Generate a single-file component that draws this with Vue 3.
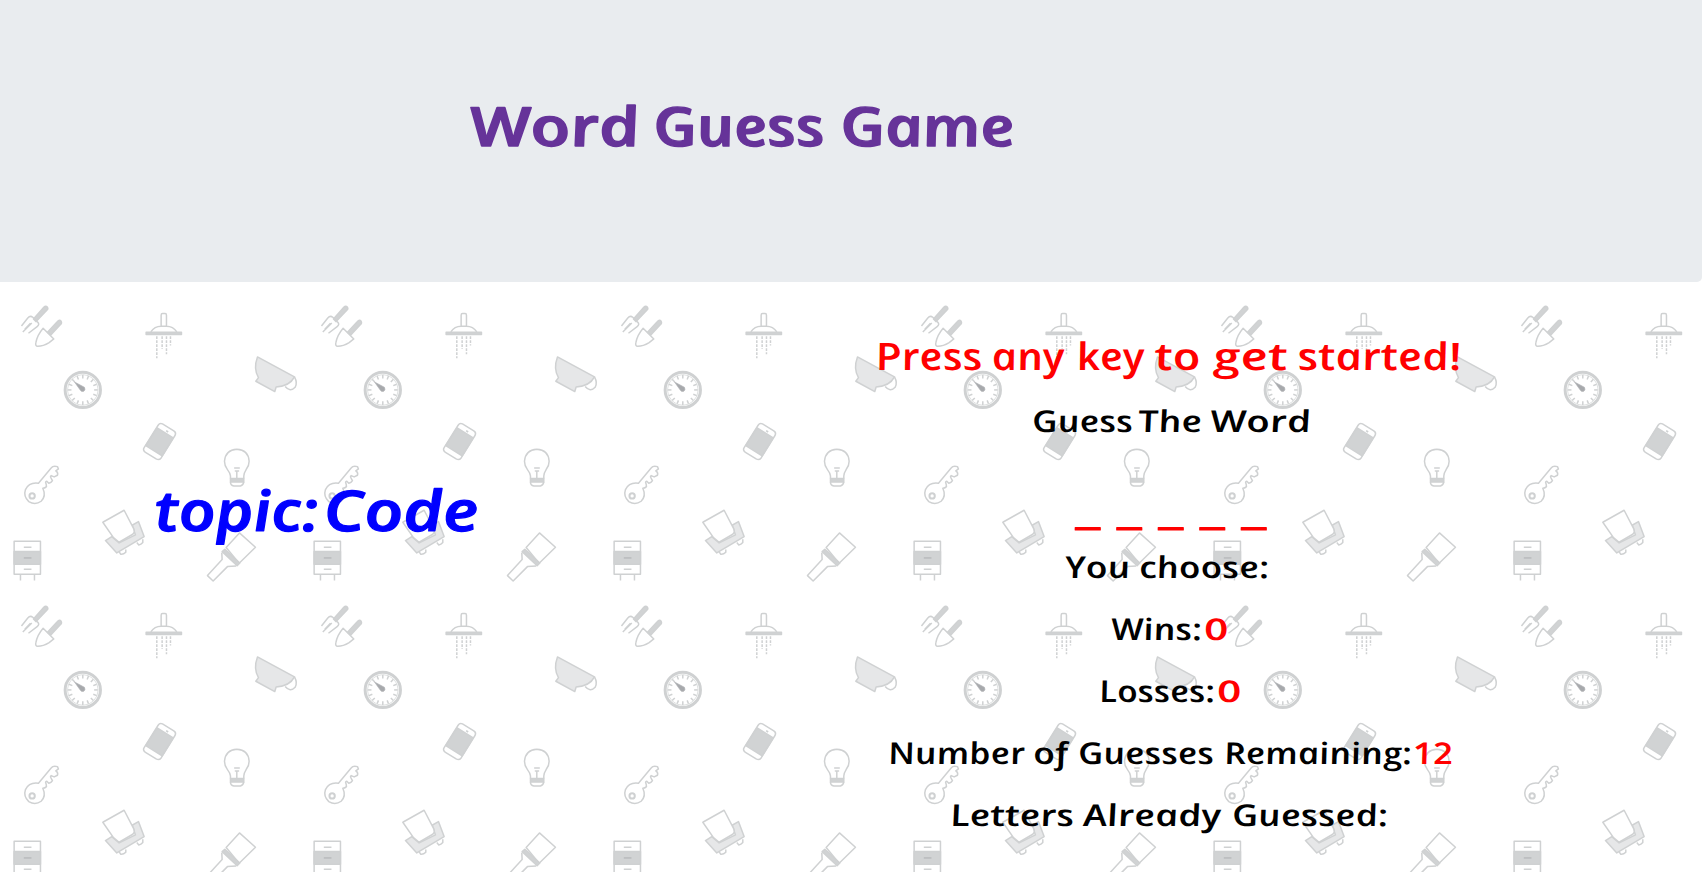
<script setup>
const topic = {
  words: [
    { t: 'topic:', x: 156, w: 164 },
    { t: 'Code', x: 325, w: 155 },
  ],
}

const title = [
  { t: 'Word', x: 473, w: 170 },
  { t: 'Guess', x: 657, w: 171 },
  { t: 'Game', x: 844, w: 174 },
]

const lines = [
  {
    kind: 'lead',
    words: [
      { t: 'Press', x: 878, w: 107 },
      { t: 'any', x: 994, w: 73 },
      { t: 'key', x: 1079, w: 68 },
      { t: 'to', x: 1157, w: 46 },
      { t: 'get', x: 1215, w: 75 },
      { t: 'started!', x: 1300, w: 164 },
    ],
  },
  {
    kind: 'plain',
    words: [
      { t: 'Guess', x: 1034, w: 101 },
      { t: 'The', x: 1140, w: 64 },
      { t: 'Word', x: 1212, w: 101 },
    ],
  },
  {
    kind: 'blanks',
    words: [1075.5, 1117, 1158.5, 1200, 1241.5].map((x) => ({ t: '_', x, w: 24.5 })),
  },
  {
    kind: 'plain',
    words: [
      { t: 'You', x: 1067, w: 65 },
      { t: 'choose:', x: 1141, w: 130 },
    ],
  },
  {
    kind: 'plain',
    words: [
      { t: 'Wins:', x: 1113, w: 91 },
      { t: '0', x: 1206, w: 24, hot: true },
    ],
  },
  {
    kind: 'plain',
    words: [
      { t: 'Losses:', x: 1101, w: 116 },
      { t: '0', x: 1219, w: 24, hot: true },
    ],
  },
  {
    kind: 'plain',
    words: [
      { t: 'Number', x: 890, w: 137 },
      { t: 'of', x: 1035, w: 35 },
      { t: 'Guesses', x: 1080, w: 136 },
      { t: 'Remaining:', x: 1226, w: 188 },
      { t: '12', x: 1415, w: 40, hot: true },
    ],
  },
  {
    kind: 'plain',
    words: [
      { t: 'Letters', x: 952, w: 124 },
      { t: 'Already', x: 1085, w: 138 },
      { t: 'Guessed:', x: 1234, w: 156 },
    ],
  },
]

const ticks = Array.from({ length: 16 }, (_, i) => i * 22.5)
</script>

<template>
  <div class="page">
    <svg class="wallpaper" width="1702" height="872">
      <defs>
        <pattern id="household" width="300" height="300" patternUnits="userSpaceOnUse">
          <g transform="translate(-.2 -.4) scale(.333333)" class="ink">
            <g transform="translate(0 -60)">
              <!-- fork and trowel -->
              <path class="solid" d="M101 118 132 83Q138 77 143 83Q146 88 141 92L109 126Z" />
              <path d="M65 139 84 115Q91 107 99 113L113 127Q121 134 112 141L86 161M69 157 96 130M75 149 92 131" />
              <path class="solid" d="M143 158 173 126Q179 119 184 125Q187 131 182 135L153 166Z" />
              <path d="M130 146 162 178 148 189Q130 200 114 200Q106 199 108 190Q112 167 130 146Z" />
              <!-- shower head -->
              <path d="M484 140V107Q484 102 488 102H496Q500 102 500 107V140M453 157Q464 140 484 140H500Q520 140 531 157" />
              <path class="solid" d="M439 158H545V165H439Z" />
              <path stroke-dasharray="8 4" d="M471 170V236M487 170V208M500 170V224M512 170V198" />
              <!-- dial -->
              <circle cx="249" cy="331" r="53" stroke-width="9" />
              <circle cx="249" cy="331" r="46" stroke-width="2" />
              <path
                v-for="a in ticks"
                :key="a"
                d="M249 286V297"
                :transform="`rotate(${a} 249 331)`"
              />
              <path class="needle" d="M224 307 254 323Q258 331 252 335Q245 338 241 331Z" />
              <!-- cup -->
              <path class="light" d="M773 232 884 292Q870 320 829 322L825 336 768 305 776 294Q760 267 773 232Z" />
              <path d="M884 292Q894 310 886 323Q871 339 856 321" />
            </g>
            <g transform="translate(0 360)">
              <!-- phone -->
              <path d="M488 13 522 34Q530 39 526 47L484 115Q478 123 469 118L437 98Q428 92 433 84L475 17Q480 9 488 13Z" />
              <path class="solid" d="M472 25 520 55 487 109 438 78Z" />
              <path stroke-width="5" d="M499 33 505 37" />
              <!-- key -->
              <path d="M116 191 154 145Q160 137 173 141L176 148 168 154Q176 159 173 167L163 172 154 168Q150 172 154 176L158 183Q154 190 147 191L141 185Q135 187 139 193L140 201Q135 206 129 206Q140 229 124 245Q106 258 87 246Q70 231 77 210Q88 187 116 191Z" />
              <circle cx="97" cy="229" r="8" stroke-width="6" />
              <!-- bulb -->
              <path d="M692 177V169Q691 160 683 150Q674 139 674 125Q677 91 711 89Q746 91 748 125Q748 139 739 150Q732 161 732 169V177" />
              <path class="solid" d="M692 177H732V187H692Z" />
              <path d="M692 187Q692 197 702 199H722Q731 196 732 187M711 176V154M703 145H720M705 154H718" />
              <!-- toaster -->
              <path class="light" d="M317 363 336 351 358 370 407 346 397 317 416 306 433 351 351 400Z" />
              <path class="paper" d="M309 308 373 272 402 328Q406 337 399 344L358 368 341 354Z" />
              <path d="M358 397 363 404Q371 405 378 398V390M411 369 417 376Q424 375 429 369V359" />
              <!-- drawers -->
              <path d="M43 365H122V464H43ZM72 383H95M72 449H95M62 465V483M104 465V483" />
              <path class="solid" d="M43 396H122V434H43Z" />
              <path stroke="#b9bbbd" d="M72 415H95" />
              <!-- brush -->
              <path d="M679 384 719 340 767 383 718 431ZM666 399 667 420 623 468 640 484 683 441 709 439" />
              <path class="solid" d="M675 389 720 430 712 438 667 396Z" />
            </g>
          </g>
        </pattern>
      </defs>
      <rect width="1702" height="872" fill="url(#household)" />
    </svg>

    <header class="banner">
      <svg class="line" viewBox="0 0 1702 282" width="1702" height="282">
        <g transform="translate(0 146) skewX(13)">
          <text class="title">
            <template v-for="(w, i) in title" :key="w.x">{{ i ? ' ' : '' }}<tspan :x="w.x" :textLength="w.w" lengthAdjust="spacingAndGlyphs">{{ w.t }}</tspan></template>
          </text>
        </g>
      </svg>
    </header>

    <main class="board">
      <section class="topic">
        <svg class="line" viewBox="0 0 851 100" width="851" height="100">
          <g transform="translate(0 61) skewX(5)">
            <text class="topic-text">
              <tspan
                v-for="w in topic.words"
                :key="w.x"
                :x="w.x"
                :textLength="w.w"
                lengthAdjust="spacingAndGlyphs"
              >{{ w.t }}</tspan>
            </text>
          </g>
        </svg>
      </section>
      <section class="status">
        <svg
          v-for="(line, n) in lines"
          :key="n"
          class="line"
          :viewBox="`851 0 851 ${line.kind === 'blanks' ? 84 : 62}`"
          width="851"
          :height="line.kind === 'blanks' ? 84 : 62"
        >
          <g :transform="line.kind === 'blanks' ? 'translate(0 70.5)' : 'translate(0 40.5) skewX(13)'">
            <text :class="line.kind">
              <template v-for="(w, i) in line.words" :key="w.x">{{ i ? ' ' : '' }}<tspan :x="w.x" :textLength="w.w" lengthAdjust="spacingAndGlyphs" :class="{ hot: w.hot }">{{ w.t }}</tspan></template>
            </text>
          </g>
        </svg>
      </section>
    </main>
  </div>
</template>

<style>
body {
  background: #fff;
  overflow: hidden;
}
</style>

<style scoped>
.page {
  position: relative;
  width: 1702px;
  height: 872px;
  overflow: hidden;
}
.wallpaper {
  position: absolute;
  inset: 0;
}
.ink {
  fill: none;
  stroke: #cfd1d2;
  stroke-width: 4.5;
  stroke-linejoin: round;
}
.solid {
  fill: #d1d3d4;
}
.light {
  fill: #e6e7e8;
}
.paper {
  fill: #fff;
}
.needle {
  fill: #a7a9ac;
  stroke: #b5b7b9;
  stroke-width: 2;
}
.banner {
  position: relative;
  height: 282px;
  background: #e9ecef;
  border-radius: 0 0 5px 0;
}
.board {
  position: relative;
  display: grid;
  grid-template-columns: 851px 851px;
  height: 590px;
}
.topic {
  padding-top: 188px;
}
.status {
  padding-top: 47px;
  display: flex;
  flex-direction: column;
}
.line {
  display: block;
  overflow: visible;
  flex: none;
}
text {
  font-family: "Open Sans", "Noto Sans", sans-serif;
  font-style: italic;
  font-weight: 600;
  stroke-linejoin: round;
  stroke-linecap: round;
}
.title {
  font-size: 54px;
  fill: #663399;
  stroke: #663399;
  stroke-width: 1.4;
}
.topic-text {
  font-size: 56px;
  fill: #0000ff;
  stroke: #0000ff;
  stroke-width: 1.2;
}
.lead {
  font-size: 38px;
  fill: #ff0000;
}
.plain {
  font-size: 30px;
  fill: #000;
}
.blanks {
  font-size: 40px;
  font-style: normal;
  fill: #ff0000;
  stroke: #ff0000;
  stroke-width: 1;
}
.hot {
  fill: #ff0000;
}
</style>
